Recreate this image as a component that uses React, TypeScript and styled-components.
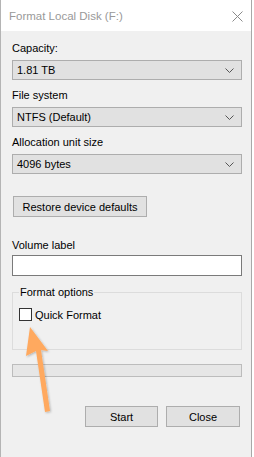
import styled, { createGlobalStyle } from 'styled-components';

const GlobalStyle = createGlobalStyle`
	html, body {
		margin: 0;
		padding: 0;
		background: #ffffff;
		overflow: hidden;
	}
	* {
		box-sizing: border-box;
	}
`;

const Window = styled.div`
	position: relative;
	width: 252px;
	height: 457px;
	background: #f0f0f0;
	border-left: 1px solid #b4b4b4;
	border-right: 1px solid #a8a8a8;
	font-family: 'Liberation Sans', Arial, sans-serif;
	font-size: 11px;
	color: #000;
`;

const TitleBar = styled.div`
	height: 31px;
	background: #ffffff;
	display: flex;
	align-items: center;
	justify-content: space-between;
	padding: 0 8px 0 8px;
`;

const Title = styled.span`
	font-size: 11.5px;
	color: #999999;
	margin-top: 1px;
`;

const CloseIcon = styled.svg`
	width: 11px;
	height: 11px;
	margin-top: 1px;
`;

const Body = styled.div`
	display: flex;
	flex-direction: column;
	padding: 10px 9px 0 11px;
`;

const Label = styled.div<{ $top?: number; $bottom?: number }>`
	height: 14px;
	line-height: 14px;
	margin-top: ${({ $top }) => $top ?? 0}px;
	margin-bottom: ${({ $bottom }) => $bottom ?? 5}px;
`;

const Combo = styled.div`
	height: 20px;
	background: #e1e1e1;
	border: 1px solid #adadad;
	display: flex;
	align-items: center;
	justify-content: space-between;
	padding: 0 7px 0 4px;
`;

const Chevron = styled.svg`
	width: 9px;
	height: 5px;
`;

const Button = styled.div<{ $width: number }>`
	width: ${({ $width }) => $width}px;
	height: 21px;
	background: #e1e1e1;
	border: 1px solid #adadad;
	display: flex;
	align-items: center;
	justify-content: center;
`;

const RestoreRow = styled.div`
	margin-top: 22px;
	padding-left: 1px;
`;

const TextBox = styled.div`
	height: 21px;
	background: #ffffff;
	border: 1px solid #7a7a7a;
`;

const Group = styled.fieldset`
	margin: 9px 0 0 0;
	padding: 0 6px;
	height: 65px;
	border: 1px solid #dcdcdc;
	border-radius: 0;
	min-width: 0;
`;

const Legend = styled.legend`
	padding: 0 1px;
	line-height: 14px;
`;

const CheckRow = styled.label`
	display: flex;
	align-items: center;
	gap: 3px;
	margin-top: 9px;
`;

const CheckBox = styled.span`
	width: 13px;
	height: 13px;
	background: #ffffff;
	border: 1px solid #333333;
`;

const Progress = styled.div`
	height: 13px;
	margin-top: 14px;
	background: #e6e6e6;
	border: 1px solid #bcbcbc;
`;

const Actions = styled.div`
	display: flex;
	justify-content: flex-end;
	gap: 8px;
	margin-top: 29px;
	padding-right: 2px;
`;

const Arrow = styled.svg`
	position: absolute;
	left: 0;
	top: 0;
	width: 60px;
	height: 420px;
	pointer-events: none;
`;

const ComboField = ({ value }: { value: string }) => (
	<Combo>
		<span>{value}</span>
		<Chevron viewBox='0 0 9 5'>
			<path d='M0.5 0.5 L4.5 4.5 L8.5 0.5' fill='none' stroke='#555' strokeWidth='1' />
		</Chevron>
	</Combo>
);

const App = () => {
	return (
		<>
			<GlobalStyle />
			<Window>
				<TitleBar>
					<Title>Format Local Disk (F:)</Title>
					<CloseIcon viewBox='0 0 11 11'>
						<path d='M0.5 0.5 L10.5 10.5 M10.5 0.5 L0.5 10.5' stroke='#8a8a8a' strokeWidth='1' />
					</CloseIcon>
				</TitleBar>
				<Body>
					<Label>Capacity:</Label>
					<ComboField value='1.81 TB' />
					<Label $top={8}>File system</Label>
					<ComboField value='NTFS (Default)' />
					<Label $top={8}>Allocation unit size</Label>
					<ComboField value='4096 bytes' />
					<RestoreRow>
						<Button $width={134}>Restore device defaults</Button>
					</RestoreRow>
					<Label $top={21} $bottom={3}>Volume label</Label>
					<TextBox />
					<Group>
						<Legend>Format options</Legend>
						<CheckRow>
							<CheckBox />
							<span>Quick Format</span>
						</CheckRow>
					</Group>
					<Progress />
					<Actions>
						<Button $width={73}>Start</Button>
						<Button $width={74}>Close</Button>
					</Actions>
				</Body>
				<Arrow viewBox='0 0 60 420'>
					<defs>
						<filter id='shadow' x='-30%' y='-10%' width='160%' height='130%'>
							<feDropShadow dx='1' dy='1' stdDeviation='1' floodColor='#000' floodOpacity='0.25' />
						</filter>
					</defs>
					<polygon
						points='29,327 47,351 40,350 49,411 44,412 35,351 25,356'
						fill='#ffa95e'
						filter='url(#shadow)'
					/>
				</Arrow>
			</Window>
		</>
	);
};

export default App;
